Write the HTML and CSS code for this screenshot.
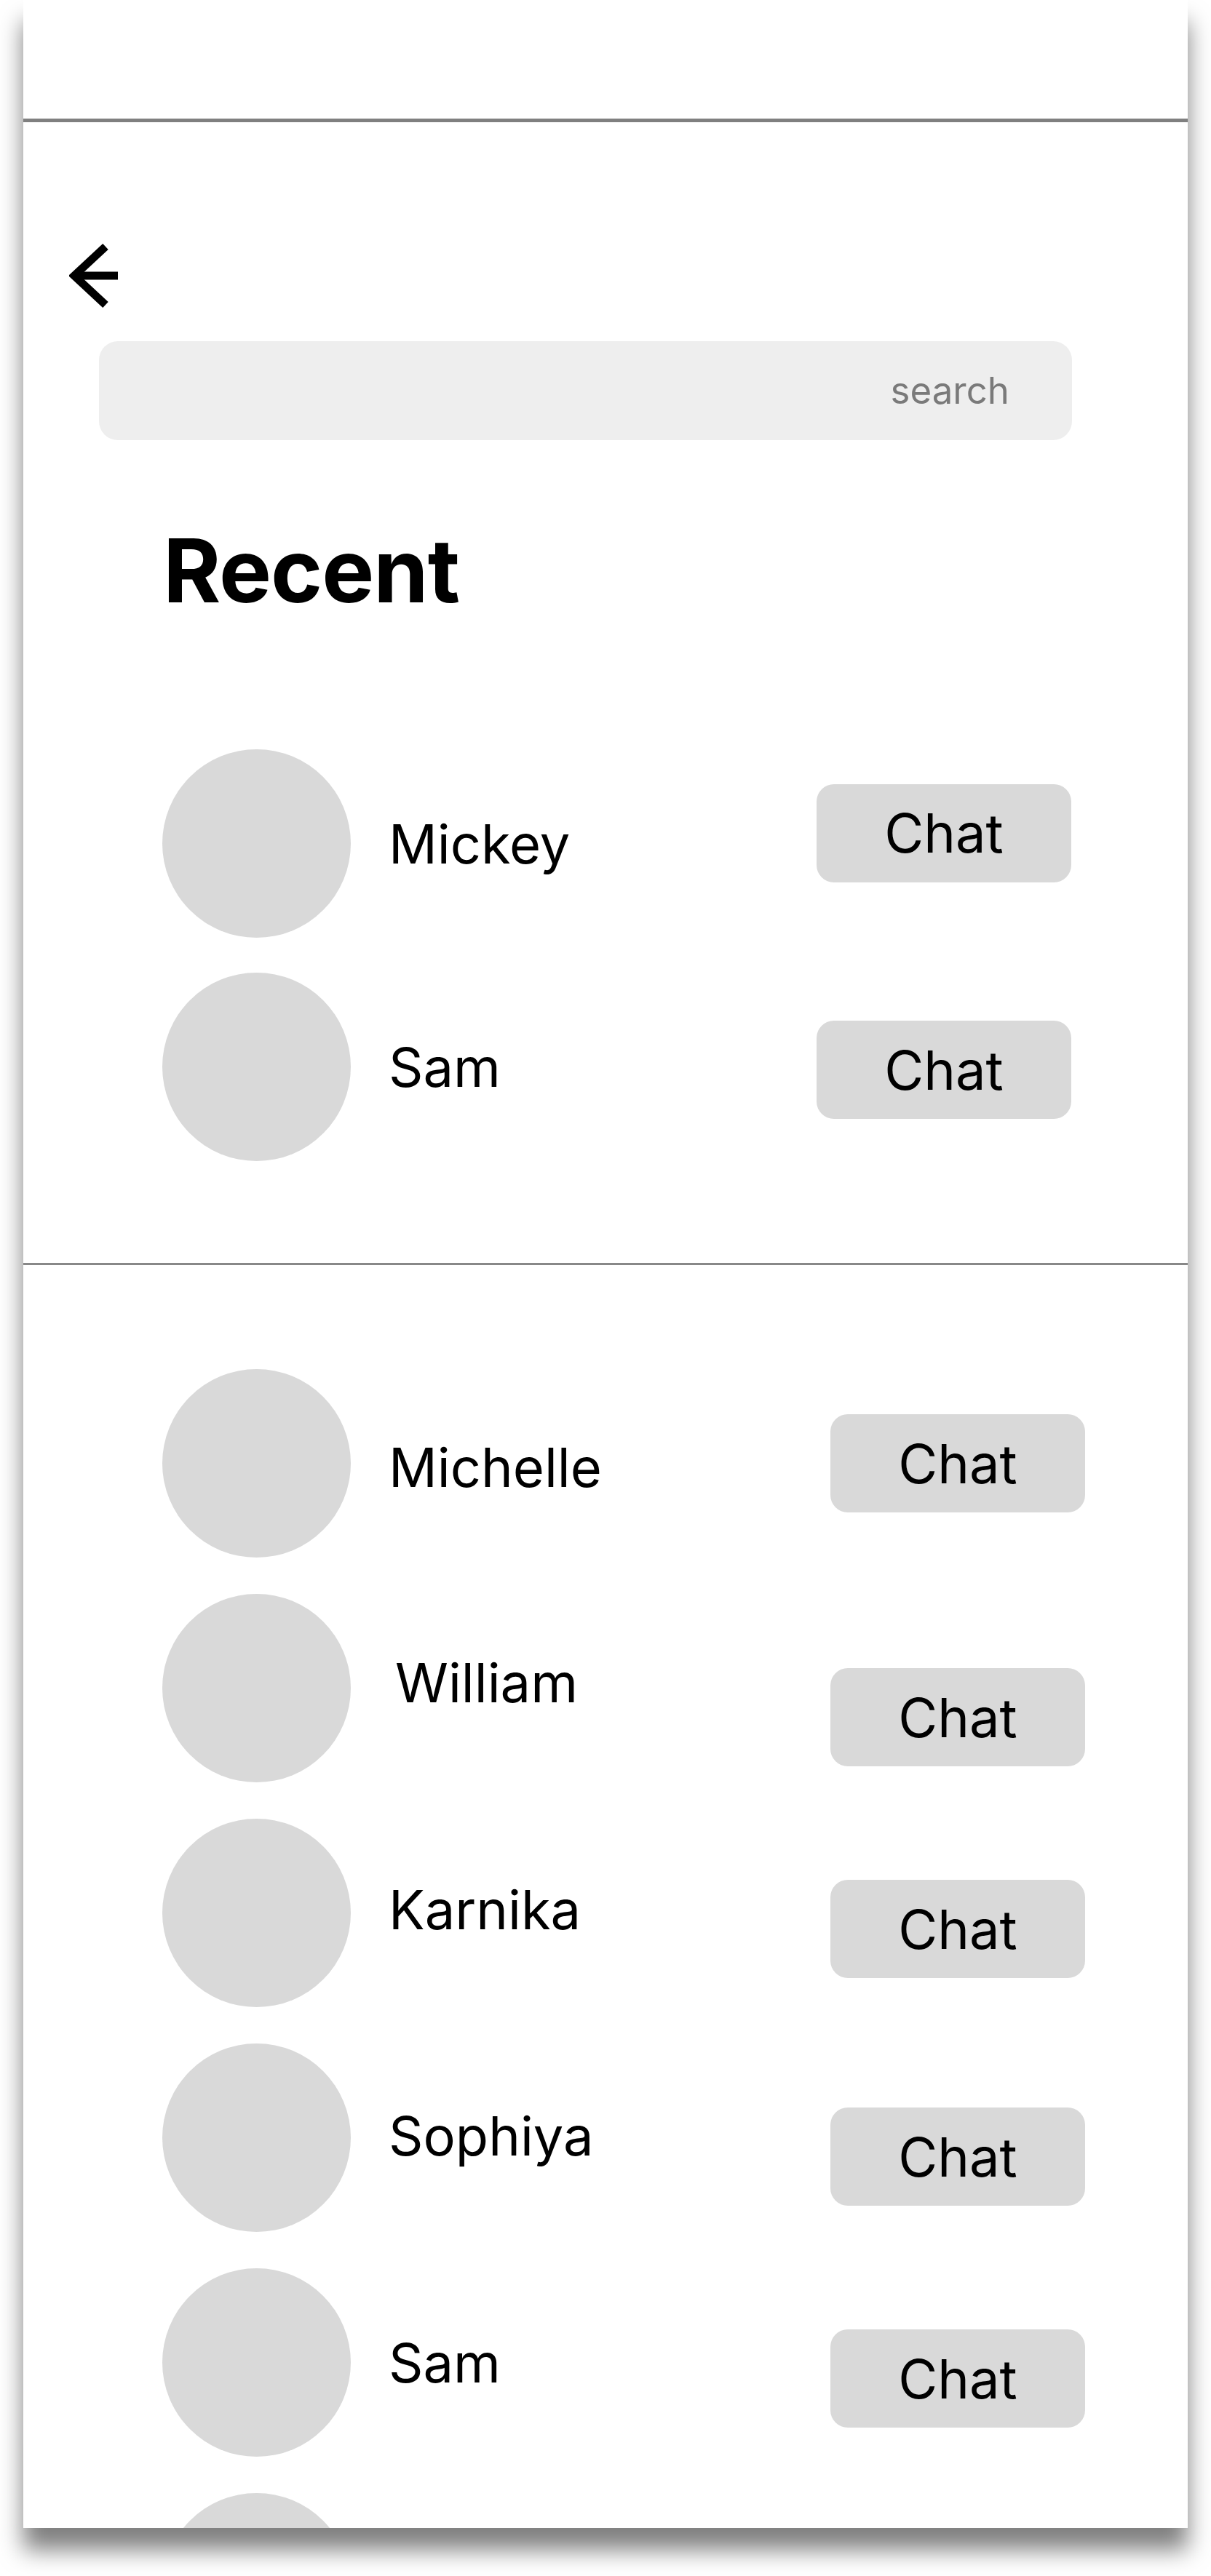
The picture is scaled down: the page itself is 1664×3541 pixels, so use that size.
FILE: index.html
```html
<!DOCTYPE html>
<html lang="en">
<head>
<meta charset="utf-8">
<title>Recent chats</title>
<link rel="stylesheet" href="styles.css">
</head>
<body>
<div class="card">
  <div class="topbar"></div>
  <button class="back" aria-label="Back">
    <svg width="72" height="88" viewBox="0 0 72 88" fill="none" stroke="#000" stroke-width="11">
      <path d="M50 4 L7 44 L50 84" stroke-linejoin="miter"/>
      <path d="M8 44 H67"/>
    </svg>
  </button>
  <div class="search"><span class="search-text">search</span></div>
  <h1 class="title">Recent</h1>

  <section class="list list--recent">
    <div class="row">
      <div class="avatar"></div>
      <span class="name">Mickey</span>
      <span class="chat chat--up15">Chat</span>
    </div>
    <div class="row">
      <div class="avatar"></div>
      <span class="name">Sam</span>
      <span class="chat chat--dn4">Chat</span>
    </div>
  </section>

  <hr class="divider">

  <section class="list list--all">
    <div class="row">
      <div class="avatar"></div>
      <span class="name name--dn5">Michelle</span>
      <span class="chat">Chat</span>
    </div>
    <div class="row">
      <div class="avatar"></div>
      <span class="name name--up8 name--in">William</span>
      <span class="chat chat--dn40">Chat</span>
    </div>
    <div class="row">
      <div class="avatar"></div>
      <span class="name name--up5">Karnika</span>
      <span class="chat chat--dn22">Chat</span>
    </div>
    <div class="row">
      <div class="avatar"></div>
      <span class="name name--up3">Sophiya</span>
      <span class="chat chat--dn26">Chat</span>
    </div>
    <div class="row">
      <div class="avatar"></div>
      <span class="name">Sam</span>
      <span class="chat chat--dn22">Chat</span>
    </div>
    <div class="row">
      <div class="avatar"></div>
      <span class="name"></span>
      <span></span>
    </div>
  </section>
</div>
</body>
</html>
```
FILE: styles.css
```css
* { box-sizing: border-box; }

html, body {
  margin: 0;
  padding: 0;
  background: #ffffff;
}

body {
  font-family: "Inter", "Liberation Sans", sans-serif;
  color: #000;
  padding-bottom: 66px;
  min-height: 3541px;
}

.card {
  margin: 0 32px;
  width: 1600px;
  height: 3475px;
  background: #ffffff;
  overflow: hidden;
  box-shadow: 0 30px 30px rgba(0, 0, 0, 0.5);
}

.topbar {
  height: 168px;
  border-bottom: 5px solid #808080;
}

.back {
  display: block;
  margin: 167px 0 0 63px;
  padding: 0;
  border: 0;
  background: none;
  width: 72px;
  height: 88px;
}

.back svg { display: block; }

.search {
  margin: 46px 0 0 104px;
  width: 1337px;
  height: 136px;
  background: #eeeeee;
  border-radius: 26px;
  display: flex;
  align-items: center;
  justify-content: flex-end;
  padding-right: 86px;
}

.search-text {
  font-size: 51px;
  color: #7a7a7a;
  line-height: 1.21;
}

.title {
  margin: 117px 0 0 192px;
  font-size: 121px;
  font-weight: 700;
  line-height: 124px;
  letter-spacing: -1px;
}

.list {
  display: flex;
  flex-direction: column;
  padding-left: 191px;
}

.list--recent {
  margin-top: 184px;
  gap: 48px;
  padding-right: 160px;
}

.list--all {
  margin-top: 143px;
  gap: 50px;
  padding-right: 141px;
}

.row {
  display: grid;
  grid-template-columns: 259px 1fr 350px;
  column-gap: 52px;
  align-items: center;
  height: 259px;
}

.avatar {
  width: 259px;
  height: 259px;
  border-radius: 50%;
  background: #d9d9d9;
}

.name {
  font-size: 74px;
  line-height: 92px;
  color: #000;
}

.name--dn5 { margin-top: 10px; }
.name--up8 { margin-bottom: 16px; }
.name--up5 { margin-bottom: 10px; }
.name--up3 { margin-bottom: 5px; }
.name--in { padding-left: 9px; }

.chat {
  display: flex;
  align-items: center;
  justify-content: center;
  width: 350px;
  height: 135px;
  border-radius: 24px;
  background: #d9d9d9;
  font-size: 74px;
  color: #000;
}

.chat--up15 { margin-bottom: 29px; }
.chat--dn4 { margin-top: 8px; }
.chat--dn22 { margin-top: 44px; }
.chat--dn26 { margin-top: 52px; }
.chat--dn40 { margin-top: 80px; }

.divider {
  margin: 140px 0 0 0;
  border: 0;
  height: 3px;
  background: #888888;
}
```
